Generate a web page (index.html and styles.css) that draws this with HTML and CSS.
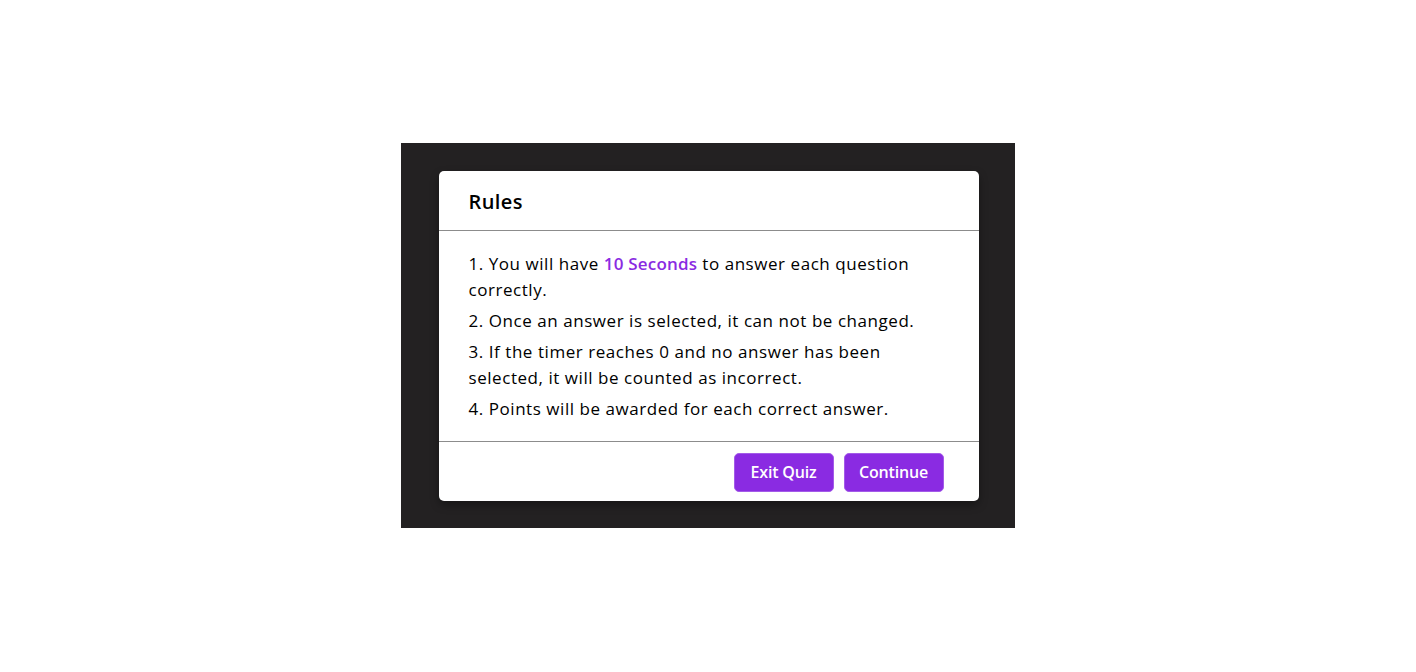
FILE: index.html
```html
<!DOCTYPE html>
<html lang="en">
<head>
<meta charset="utf-8">
<title>Rules</title>
<link rel="stylesheet" href="styles.css">
</head>
<body>
<div class="page">
  <div class="stage">
    <div class="card">
      <div class="card-header">
        <h2 class="title">Rules</h2>
      </div>
      <div class="card-body">
        <p class="rule">1. You will have <span class="hl">10 Seconds</span> to answer each question correctly.</p>
        <p class="rule">2. Once an answer is selected, it can not be changed.</p>
        <p class="rule">3. If the timer reaches 0 and no answer has been selected, it will be counted as incorrect.</p>
        <p class="rule">4. Points will be awarded for each correct answer.</p>
      </div>
      <div class="card-footer">
        <button class="btn">Exit Quiz</button>
        <button class="btn">Continue</button>
      </div>
    </div>
  </div>
</div>
</body>
</html>
```
FILE: styles.css
```css
* { box-sizing: border-box; }
html, body { margin: 0; padding: 0; background: #ffffff; }
body { font-family: "Open Sans", "Liberation Sans", sans-serif; color: #000; }
.page {
  width: 1416px;
  height: 671px;
  display: flex;
  align-items: center;
  justify-content: center;
}
.stage {
  width: 614px;
  height: 385px;
  background: #232122;
  display: flex;
  align-items: center;
  justify-content: center;
  padding-left: 1px;
}
.card {
  width: 540px;
  height: 330px;
  background: #fff;
  border-radius: 5px;
  box-shadow: 0 4px 8px rgba(0,0,0,0.35);
  display: flex;
  flex-direction: column;
}
.card-header {
  height: 60px;
  padding: 3px 30px 0;
  display: flex;
  align-items: center;
  border-bottom: 1px solid #8c8c8c;
}
.title {
  margin: 0;
  font-size: 20px;
  font-weight: 600;
  line-height: 1;
  letter-spacing: 0.4px;
}
.card-body {
  padding: 20px 30px 19px;
  flex: 1;
}
.rule {
  margin: 0 0 5px;
  font-size: 17px;
  line-height: 26px;
  letter-spacing: 0.55px;
}
.rule:last-child { margin-bottom: 0; }
.hl { color: #8a2be2; font-weight: 600; letter-spacing: 0.2px; }
.card-footer {
  border-top: 1px solid #8c8c8c;
  height: 60px;
  padding: 11px 35px 0;
  display: flex;
  justify-content: flex-end;
  align-items: flex-start;
  gap: 10px;
}
.btn {
  width: 100px;
  height: 39px;
  border: 1px solid #a35be8;
  border-radius: 5px;
  background: #8a2be2;
  color: #fff;
  font-family: inherit;
  font-size: 16px;
  font-weight: 600;
  padding: 0;
  letter-spacing: -0.2px;
}
```
